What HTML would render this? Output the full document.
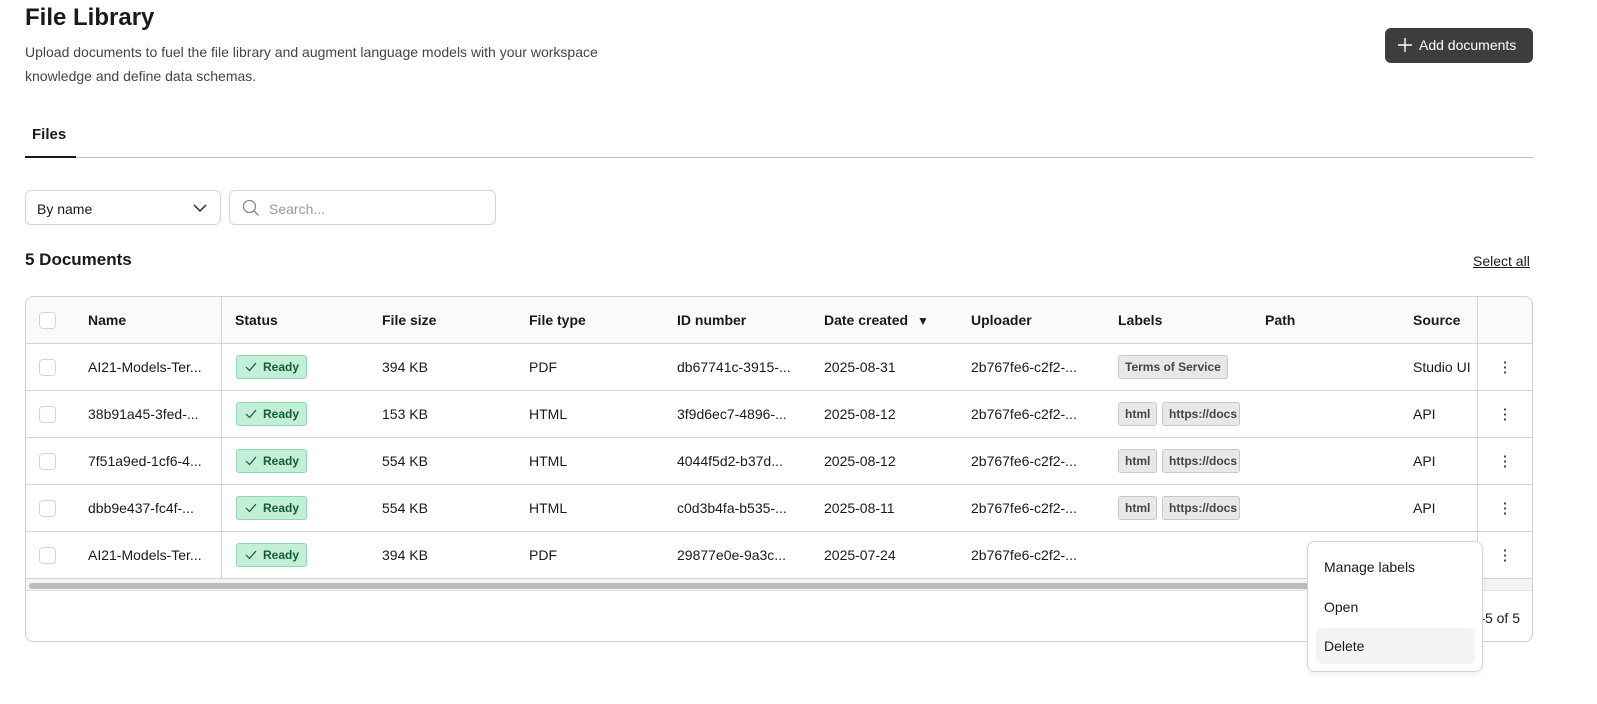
<!DOCTYPE html>
<html><head><style>
*{box-sizing:border-box;margin:0;padding:0}
html,body{width:1597px;height:704px;overflow:hidden}
body{background:#fff;font-family:"Liberation Sans",sans-serif;color:#1a1a1a;position:relative;font-size:14px}
.a{position:absolute;white-space:nowrap}
.cb{position:absolute;width:17px;height:17px;border:1px solid #d4d4d4;border-radius:4px;background:#fff}
.row{position:absolute;left:25px;width:1507px;height:47px;border-top:1px solid #d4d4d4}
.c{position:absolute;top:15px;font-size:14px;color:#1a1a1a}
.rdy{position:absolute;left:210px;top:11px;width:71px;height:24px;background:#c3eed7;border:1px solid #8fd8b1;border-radius:3px;color:#155c37;font-size:12px;font-weight:bold;padding:4px 0 0 26px}
.rdy svg{position:absolute;left:8px;top:6px}
.lb{position:absolute;top:11px;height:24px;background:#e8e8e8;border:1px solid #c8c8c8;border-radius:3px;font-size:12px;font-weight:bold;color:#444;padding:4px 6px 0}
.dots{position:absolute;left:1478px;top:16px;width:2px;height:14px;background:radial-gradient(circle,#444 1px,transparent 1.3px) 0 0/2px 5px repeat-y}
.vd{position:absolute;top:0;bottom:0;width:1px;background:#d4d4d4}
</style></head><body>
<div class="a" style="left:25px;top:4px;font-size:24px;font-weight:bold">File Library</div>
<div class="a" style="left:25px;top:40px;font-size:14px;color:#444;line-height:24px;white-space:normal;width:640px">Upload documents to fuel the file library and augment language models with your workspace knowledge and define data schemas.</div>
<div class="a" style="left:1385px;top:28px;width:148px;height:35px;background:#3d3d3d;border-radius:6px;color:#fff;font-size:14px;padding:9px 0 0 34px">Add documents
<svg style="position:absolute;left:12px;top:9px" width="16" height="16" viewBox="0 0 16 16"><path d="M8 1v14M1 8h14" stroke="#fff" stroke-width="1.4"/></svg></div>
<div class="a" style="left:32px;top:126px;font-size:15px;font-weight:bold">Files</div>
<div class="a" style="left:25px;top:157px;width:1508px;height:1px;background:#bdbdbd"></div>
<div class="a" style="left:25px;top:156px;width:51px;height:2px;background:#1a1a1a"></div>
<div class="a" style="left:25px;top:190px;width:196px;height:35px;border:1px solid #d4d4d4;border-radius:6px;padding:10px 0 0 11px;font-size:14px">By name
<svg style="position:absolute;left:166px;top:11px" width="16" height="12" viewBox="0 0 16 12"><path d="M2 3l6 6 6-6" stroke="#222" stroke-width="1.4" fill="none"/></svg></div>
<div class="a" style="left:229px;top:190px;width:267px;height:35px;border:1px solid #d4d4d4;border-radius:6px;padding:10px 0 0 39px;font-size:14px;color:#999">Search...
<svg style="position:absolute;left:12px;top:8px" width="18" height="18" viewBox="0 0 18 18"><circle cx="7.5" cy="7.5" r="6" stroke="#888" stroke-width="1.3" fill="none"/><path d="M12 12l4.5 4.5" stroke="#888" stroke-width="1.3"/></svg></div>
<div class="a" style="left:25px;top:250px;font-size:17px;font-weight:bold">5 Documents</div>
<div class="a" style="left:1473px;top:253px;font-size:14px;text-decoration:underline">Select all</div>

<div class="a" style="left:25px;top:296px;width:1508px;height:346px;border:1px solid #cfcfcf;border-radius:8px;overflow:hidden">
 <div style="position:absolute;left:0;top:0;width:100%;height:47px;background:#fafafa"></div>
 <div class="vd" style="left:195px;height:282px"></div>
 <div class="vd" style="left:1451px;height:282px"></div>
 <div style="position:absolute;left:0;top:0;width:100%;height:47px">
  <div class="cb" style="left:13px;top:15px"></div>
  <div class="c" style="left:62px;font-weight:bold">Name</div>
  <div class="c" style="left:209px;font-weight:bold">Status</div>
  <div class="c" style="left:356px;font-weight:bold">File size</div>
  <div class="c" style="left:503px;font-weight:bold">File type</div>
  <div class="c" style="left:651px;font-weight:bold">ID number</div>
  <div class="c" style="left:798px;font-weight:bold">Date created <span style="font-size:12px;margin-left:5px">▼</span></div>
  <div class="c" style="left:945px;font-weight:bold">Uploader</div>
  <div class="c" style="left:1092px;font-weight:bold">Labels</div>
  <div class="c" style="left:1239px;font-weight:bold">Path</div>
  <div class="c" style="left:1387px;font-weight:bold">Source</div>
 </div>
 <div class="row" style="left:0;top:46px">
  <div class="cb" style="left:13px;top:15px"></div><div class="c" style="left:62px">AI21-Models-Ter...</div>
  <div class="rdy"><svg width="12" height="10" viewBox="0 0 12 10"><path d="M1 5l3.5 3.5L11 1" stroke="#155c37" stroke-width="1.2" fill="none"/></svg>Ready</div>
  <div class="c" style="left:356px">394 KB</div><div class="c" style="left:503px">PDF</div><div class="c" style="left:651px">db67741c-3915-...</div><div class="c" style="left:798px">2025-08-31</div><div class="c" style="left:945px">2b767fe6-c2f2-...</div>
  <div class="lb" style="left:1092px">Terms of Service</div><div class="c" style="left:1387px">Studio UI</div><div class="dots"></div>
 </div>
 <div class="row" style="left:0;top:93px">
  <div class="cb" style="left:13px;top:15px"></div><div class="c" style="left:62px">38b91a45-3fed-...</div>
  <div class="rdy"><svg width="12" height="10" viewBox="0 0 12 10"><path d="M1 5l3.5 3.5L11 1" stroke="#155c37" stroke-width="1.2" fill="none"/></svg>Ready</div>
  <div class="c" style="left:356px">153 KB</div><div class="c" style="left:503px">HTML</div><div class="c" style="left:651px">3f9d6ec7-4896-...</div><div class="c" style="left:798px">2025-08-12</div><div class="c" style="left:945px">2b767fe6-c2f2-...</div>
  <div class="lb" style="left:1092px">html</div><div class="lb" style="left:1136px;width:78px;overflow:hidden">https://docs</div><div class="c" style="left:1387px">API</div><div class="dots"></div>
 </div>
 <div class="row" style="left:0;top:140px">
  <div class="cb" style="left:13px;top:15px"></div><div class="c" style="left:62px">7f51a9ed-1cf6-4...</div>
  <div class="rdy"><svg width="12" height="10" viewBox="0 0 12 10"><path d="M1 5l3.5 3.5L11 1" stroke="#155c37" stroke-width="1.2" fill="none"/></svg>Ready</div>
  <div class="c" style="left:356px">554 KB</div><div class="c" style="left:503px">HTML</div><div class="c" style="left:651px">4044f5d2-b37d...</div><div class="c" style="left:798px">2025-08-12</div><div class="c" style="left:945px">2b767fe6-c2f2-...</div>
  <div class="lb" style="left:1092px">html</div><div class="lb" style="left:1136px;width:78px;overflow:hidden">https://docs</div><div class="c" style="left:1387px">API</div><div class="dots"></div>
 </div>
 <div class="row" style="left:0;top:187px">
  <div class="cb" style="left:13px;top:15px"></div><div class="c" style="left:62px">dbb9e437-fc4f-...</div>
  <div class="rdy"><svg width="12" height="10" viewBox="0 0 12 10"><path d="M1 5l3.5 3.5L11 1" stroke="#155c37" stroke-width="1.2" fill="none"/></svg>Ready</div>
  <div class="c" style="left:356px">554 KB</div><div class="c" style="left:503px">HTML</div><div class="c" style="left:651px">c0d3b4fa-b535-...</div><div class="c" style="left:798px">2025-08-11</div><div class="c" style="left:945px">2b767fe6-c2f2-...</div>
  <div class="lb" style="left:1092px">html</div><div class="lb" style="left:1136px;width:78px;overflow:hidden">https://docs</div><div class="c" style="left:1387px">API</div><div class="dots"></div>
 </div>
 <div class="row" style="left:0;top:234px">
  <div class="cb" style="left:13px;top:15px"></div><div class="c" style="left:62px">AI21-Models-Ter...</div>
  <div class="rdy"><svg width="12" height="10" viewBox="0 0 12 10"><path d="M1 5l3.5 3.5L11 1" stroke="#155c37" stroke-width="1.2" fill="none"/></svg>Ready</div>
  <div class="c" style="left:356px">394 KB</div><div class="c" style="left:503px">PDF</div><div class="c" style="left:651px">29877e0e-9a3c...</div><div class="c" style="left:798px">2025-07-24</div><div class="c" style="left:945px">2b767fe6-c2f2-...</div>
  <div class="dots"></div>
 </div>
 <div style="position:absolute;left:0;top:281px;width:100%;height:13px;background:#f4f4f4;border-top:1px solid #d4d4d4;border-bottom:1px solid #e4e4e4"></div>
 <div style="position:absolute;left:3px;top:286px;width:1300px;height:6px;background:#bdbdbd;border-radius:3px"></div>
 <div class="c" style="right:12px;top:313px">1–5 of 5</div>
</div>

<div class="a" style="left:1307px;top:541px;width:176px;height:131px;background:#fff;border:1px solid #d4d4d4;border-radius:8px;box-shadow:0 2px 6px rgba(0,0,0,.08)">
 <div class="a" style="left:16px;top:17px;font-size:14px">Manage labels</div>
 <div class="a" style="left:16px;top:57px;font-size:14px">Open</div>
 <div class="a" style="left:8px;top:86px;width:159px;height:36px;background:#f4f4f4;border-radius:6px"></div>
 <div class="a" style="left:16px;top:96px;font-size:14px">Delete</div>
</div>
</body></html>
